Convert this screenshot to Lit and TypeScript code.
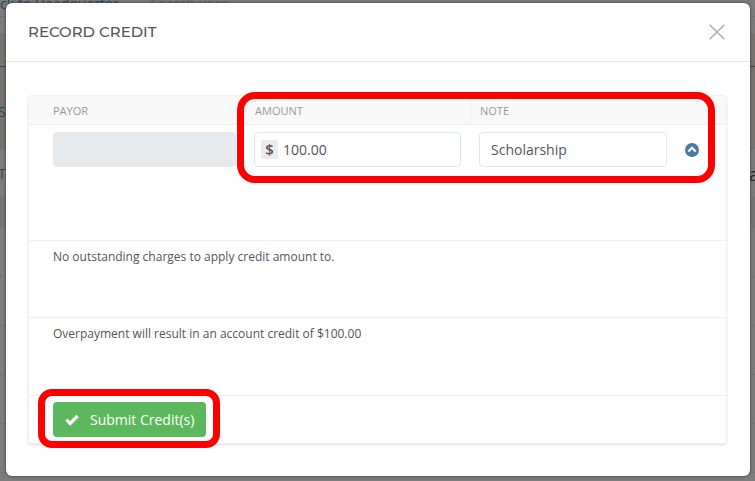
import { LitElement, html, css } from "lit";
import { customElement, state } from "lit/decorators.js";

@customElement("app-root")
export class AppRoot extends LitElement {
  @state() private amount = "100.00";
  @state() private note = "Scholarship";

  static styles = css`
    :host {
      display: grid;
      min-height: 100vh;
      overflow: hidden;
      background: #7c7c7c;
      color: #555;
      font-family: "Open Sans", "Noto Sans", sans-serif;
      font-size: 12px;
      line-height: 18px;
    }
    * { box-sizing: border-box; }
    .page, .dialog { grid-area: 1 / 1; min-width: 0; }
    .page { font-size: 14px; color: #28485c; overflow: hidden; }
    .topbar { display: flex; gap: 32px; height: 17px; border-bottom: 1px solid #707070; }
    .crumb {
      color: #24455c;
      line-height: 8px;
      text-decoration: none;
    }
    .search { color: #5c5c5c; line-height: 8px; }
    .tabs { height: 18px; border-bottom: 1px solid #707070; }
    .strip { height: 32px; border-bottom: 1px solid #444; background: #757472; }
    .side { display: flex; justify-content: space-between; line-height: 20px; }
    .first { height: 82px; padding-top: 35px; background: #757472; border-bottom: 1px solid #6f6f6f; }
    .second { height: 49px; padding-top: 15px; border-bottom: 1px solid #727272; }
    .third { height: 30px; background: #757575; }
    .line { height: 49px; border-bottom: 1px solid #727272; }
    .edge { margin-left: -2px; }
    .far { margin-right: -4px; color: #222; font-size: 18px; }
    .dialog {
      align-self: start;
      position: relative;
      margin: 3px 5px 4px 6px;
      background: #fff;
      border-radius: 6px;
      box-shadow: 0 0 3px #333;
    }
    .head {
      display: flex;
      align-items: center;
      justify-content: space-between;
      height: 59px;
      padding: 0 25px 0 22px;
      border-bottom: 1px solid #e8e8e8;
    }
    h1 {
      margin: 0;
      color: #555;
      font: 500 15px/20px Montserrat, Inter, sans-serif;
    }
    button { font: inherit; cursor: pointer; }
    .icon { display: flex; padding: 0; border: 0; background: none; }
    .body { padding: 33px 23px 32px 22px; }
    .card {
      border: 1px solid #f0f0f0;
      border-radius: 4px;
      box-shadow: 0 1px 2px #ddd;
    }
    .entry { position: relative; height: 144px; }
    table { width: 100%; table-layout: fixed; border-collapse: separate; border-spacing: 0; }
    th {
      height: 29px;
      padding: 2px 9px 0;
      background: #f9f9f9;
      border-bottom: 1px solid #eee;
      color: #999;
      font-size: 11px;
      font-weight: 400;
      text-align: left;
    }
    th + th { border-left: 1px solid #f0f0f0; }
    th.last { width: 50px; border-left: 0; }
    td { padding: 7px 9px; }
    th:first-child, td:first-child { padding-left: 24px; }
    .payor { width: 31%; }
    .note { width: 206px; }
    .field {
      display: flex;
      align-items: center;
      gap: 5px;
      height: 35px;
      padding: 0 6px;
      border: 1px solid #dfe7ee;
      border-radius: 4px;
      background: #fff;
    }
    .field.off { background: #e6eaed; border-color: #e3e8ec; }
    input {
      flex: 1;
      min-width: 0;
      width: 100%;
      padding: 0;
      border: 0;
      outline: 0;
      background: none;
      color: #555560;
      font: 14px/20px "Open Sans", sans-serif;
    }
    .field.plain { padding: 0 11px; }
    .unit {
      width: 17px;
      border-radius: 2px;
      background: #ebebeb;
      color: #555;
      font-size: 15px;
      font-weight: 600;
      line-height: 19px;
      text-align: center;
    }
    p { height: 77px; margin: 0; padding: 7px 24px; border-top: 1px solid #f0f0f0; }
    p + p { height: 78px; }
    .foot { padding: 6px 24px; border-top: 1px solid #f0f0f0; }
    .action { position: relative; width: fit-content; }
    .submit {
      display: flex;
      align-items: center;
      gap: 11px;
      height: 35px;
      padding: 0 12px;
      border: 0;
      border-radius: 4px;
      background: #5cb85c;
      color: #fff;
      font-size: 14px;
    }
    .mark { position: absolute; border: 7px solid #f00; pointer-events: none; }
    .mark.wide { top: -4px; left: calc(31% - 8px); right: 11px; height: 91px; border-radius: 18px; }
    .mark.tight { inset: -13px -14px -11px -15px; border-radius: 14px; }
  `;

  render() {
    return html`
      <div class="page" inert>
        <div class="topbar">
          <a class="crumb" href="#">ck to Headquarter</a>
          <span class="search">Search user</span>
        </div>
        <div class="tabs"></div>
        <div class="strip"></div>
        <div class="side first"><span class="edge">S</span></div>
        <div class="side second"><span class="edge">T</span><span class="far">a</span></div>
        <div class="third"></div>
        ${[1, 2, 3, 4, 5].map(() => html`<div class="line"></div>`)}
      </div>
      <section class="dialog" role="dialog" aria-labelledby="title">
        <header class="head">
          <h1 id="title">RECORD CREDIT</h1>
          <button class="icon" aria-label="Close">
            <svg width="16" height="16" viewBox="0 0 16 16" stroke="#aaa" stroke-width="1.4">
              <path d="M.7.7l14.6 14.6M15.3.7.7 15.3" />
            </svg>
          </button>
        </header>
        <div class="body">
          <div class="card">
            <div class="entry">
              <table>
                <thead>
                  <tr>
                    <th class="payor" id="payor">PAYOR</th>
                    <th id="amount">AMOUNT</th>
                    <th class="note" id="note">NOTE</th>
                    <th class="last"></th>
                  </tr>
                </thead>
                <tbody>
                  <tr>
                    <td><div class="field off"><input aria-labelledby="payor" disabled /></div></td>
                    <td>
                      <div class="field">
                        <span class="unit">$</span>
                        <input aria-labelledby="amount" .value=${this.amount}
                          @input=${(e: Event) => (this.amount = (e.target as HTMLInputElement).value)} />
                      </div>
                    </td>
                    <td>
                      <div class="field plain">
                        <input aria-labelledby="note" .value=${this.note}
                          @input=${(e: Event) => (this.note = (e.target as HTMLInputElement).value)} />
                      </div>
                    </td>
                    <td>
                      <button class="icon" aria-label="Collapse">
                        <svg width="14" height="14" viewBox="0 0 14 14">
                          <circle cx="7" cy="7" r="7" fill="#467ba6" />
                          <path d="M3.3 8.5 7 4.8l3.7 3.7" fill="none" stroke="#fff" stroke-width="2.2" />
                        </svg>
                      </button>
                    </td>
                  </tr>
                </tbody>
              </table>
              <div class="mark wide"></div>
            </div>
            <p>No outstanding charges to apply credit amount to.</p>
            <p>Overpayment will result in an account credit of $${this.amount}</p>
            <div class="foot">
              <div class="action">
                <button class="submit">
                  <svg width="14" height="12" viewBox="0 0 14 12">
                    <path d="M1.4 5.6l3.8 3.8L12.6 2" fill="none" stroke="#fff" stroke-width="3.2" />
                  </svg>
                  Submit Credit(s)
                </button>
                <div class="mark tight"></div>
              </div>
            </div>
          </div>
        </div>
      </section>
    `;
  }
}
